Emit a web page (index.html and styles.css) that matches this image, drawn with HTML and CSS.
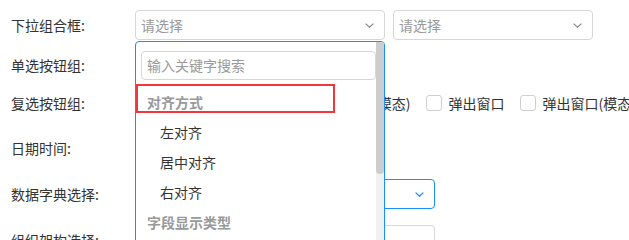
FILE: index.html
```html
<!DOCTYPE html>
<html lang="zh-CN">
<head>
<meta charset="utf-8">
<title>表单</title>
<link rel="stylesheet" href="styles.css">
</head>
<body>
<div class="form">
  <div class="row">
    <label class="lbl">下拉组合框:</label>
    <div class="combo">
      <div class="select w250">
        <span class="ph">请选择</span>
        <svg class="chev" width="9" height="5" viewBox="0 0 9 5"><polyline points="0.6,0.6 4.5,4.3 8.4,0.6" fill="none" stroke="#8c8c8c" stroke-width="1.2"/></svg>
      </div>
      <div class="panel">
        <div class="panel-body">
          <div class="search">输入关键字搜索</div>
          <div class="group">对齐方式</div>
          <div class="item">左对齐</div>
          <div class="item">居中对齐</div>
          <div class="item">右对齐</div>
          <div class="group">字段显示类型</div>
          <div class="item">文本</div>
          <div class="mark"></div>
        </div>
        <div class="scrollbar"><div class="thumb"></div></div>
      </div>
    </div>
    <div class="select w200">
      <span class="ph">请选择</span>
      <svg class="chev" width="9" height="5" viewBox="0 0 9 5"><polyline points="0.6,0.6 4.5,4.3 8.4,0.6" fill="none" stroke="#8c8c8c" stroke-width="1.2"/></svg>
    </div>
  </div>

  <div class="row gap10">
    <label class="lbl">单选按钮组:</label>
    <div class="opts">
      <span class="opt"><span class="radio"></span></span>
      <span class="opt"><span class="radio"></span></span>
    </div>
  </div>

  <div class="row gap8">
    <label class="lbl">复选按钮组:</label>
    <div class="opts">
      <span class="opt"><span class="cb"></span>当前页</span>
      <span class="opt"><span class="cb"></span>新窗口</span>
      <span class="opt"><span class="cb"></span>弹出窗口(模态)</span>
      <span class="opt"><span class="cb"></span>弹出窗口</span>
      <span class="opt"><span class="cb"></span>弹出窗口(模态)</span>
    </div>
  </div>

  <div class="row gap15">
    <label class="lbl">日期时间:</label>
    <div class="select w200"></div>
  </div>

  <div class="row gap16">
    <label class="lbl">数据字典选择:</label>
    <div class="select w300 focus">
      <span class="ph"></span>
      <svg class="chev" width="9" height="5" viewBox="0 0 9 5"><polyline points="0.6,0.6 4.5,4.3 8.4,0.6" fill="none" stroke="#1890ff" stroke-width="1.3"/></svg>
    </div>
  </div>

  <div class="row gap16">
    <label class="lbl">组织架构选择:</label>
    <div class="select w300">
      <span class="ph"></span>
      <svg class="user" width="12" height="14" viewBox="0 0 12 14"><circle cx="6" cy="4" r="3" fill="#8c8c8c"/><path d="M0.5 13.5c0-3.2 2.4-5.2 5.5-5.2s5.5 2 5.5 5.2z" fill="#8c8c8c"/></svg>
    </div>
  </div>
</div>
</body>
</html>
```
FILE: styles.css
```css
html, body {
  margin: 0;
  padding: 0;
  overflow: hidden;
  background: #fff;
}
body {
  font-family: "Noto Sans CJK SC", "Noto Sans", sans-serif;
  font-size: 14px;
  color: #333;
}
.form {
  padding: 10px 0 0 11px;
}
.row {
  display: flex;
  align-items: center;
  min-height: 30px;
}
.gap10 { margin-top: 10px; }
.gap8 { margin-top: 8px; }
.gap15 { margin-top: 15px; }
.gap16 { margin-top: 16px; }
.lbl {
  width: 124px;
  flex: none;
  line-height: 20px;
}
.combo {
  position: relative;
  margin-right: 8px;
}
.select {
  box-sizing: border-box;
  height: 30px;
  border: 1px solid #d6d6d6;
  border-radius: 4px;
  background: #fff;
  display: flex;
  align-items: center;
  padding: 0 10px 0 5px;
}
.select.focus { border-color: #1890ff; }
.w250 { width: 250px; }
.w200 { width: 200px; }
.w300 { width: 300px; }
.ph { color: #999; flex: 1; line-height: 20px; }
.chev { flex: none; display: block; }
.user { flex: none; display: block; margin-top: 14px; }
.panel {
  position: absolute;
  left: 0;
  top: calc(100% + 1px);
  width: 250px;
  height: 215px;
  box-sizing: border-box;
  border: 1px solid #1890ff;
  border-radius: 4px;
  background: #fff;
  display: flex;
  z-index: 10;
  overflow: hidden;
}
.panel-body {
  flex: 1;
  padding-top: 9px;
}
.search {
  box-sizing: border-box;
  margin-left: 5px;
  width: 235px;
  height: 29px;
  border: 1px solid #d6d6d6;
  border-radius: 4px;
  padding-left: 5px;
  line-height: 27px;
  color: #999;
}
.group {
  height: 30px;
  line-height: 30px;
  padding-left: 11px;
  color: #999;
  font-weight: bold;
}
.search + .group { margin-top: 7px; }
.item {
  height: 30px;
  line-height: 30px;
  padding-left: 24px;
  color: #333;
}
.mark {
  position: absolute;
  left: 0;
  top: 42px;
  width: 199px;
  height: 29px;
  box-sizing: border-box;
  border: 2px solid #f2363b;
}
.scrollbar {
  width: 8px;
  flex: none;
  background: #f1f1f1;
}
.thumb {
  height: 132px;
  background: #cdcdcd;
  border-radius: 0 0 4px 4px;
}
.opts {
  display: flex;
  align-items: center;
  white-space: nowrap;
}
.opt {
  display: flex;
  align-items: center;
  gap: 6px;
  margin-right: 16px;
  line-height: 20px;
}
.cb, .radio {
  box-sizing: border-box;
  width: 16px;
  height: 16px;
  border: 1px solid #cfcfcf;
  border-radius: 3px;
  background: #fff;
  flex: none;
}
.radio { border-radius: 50%; }
```
